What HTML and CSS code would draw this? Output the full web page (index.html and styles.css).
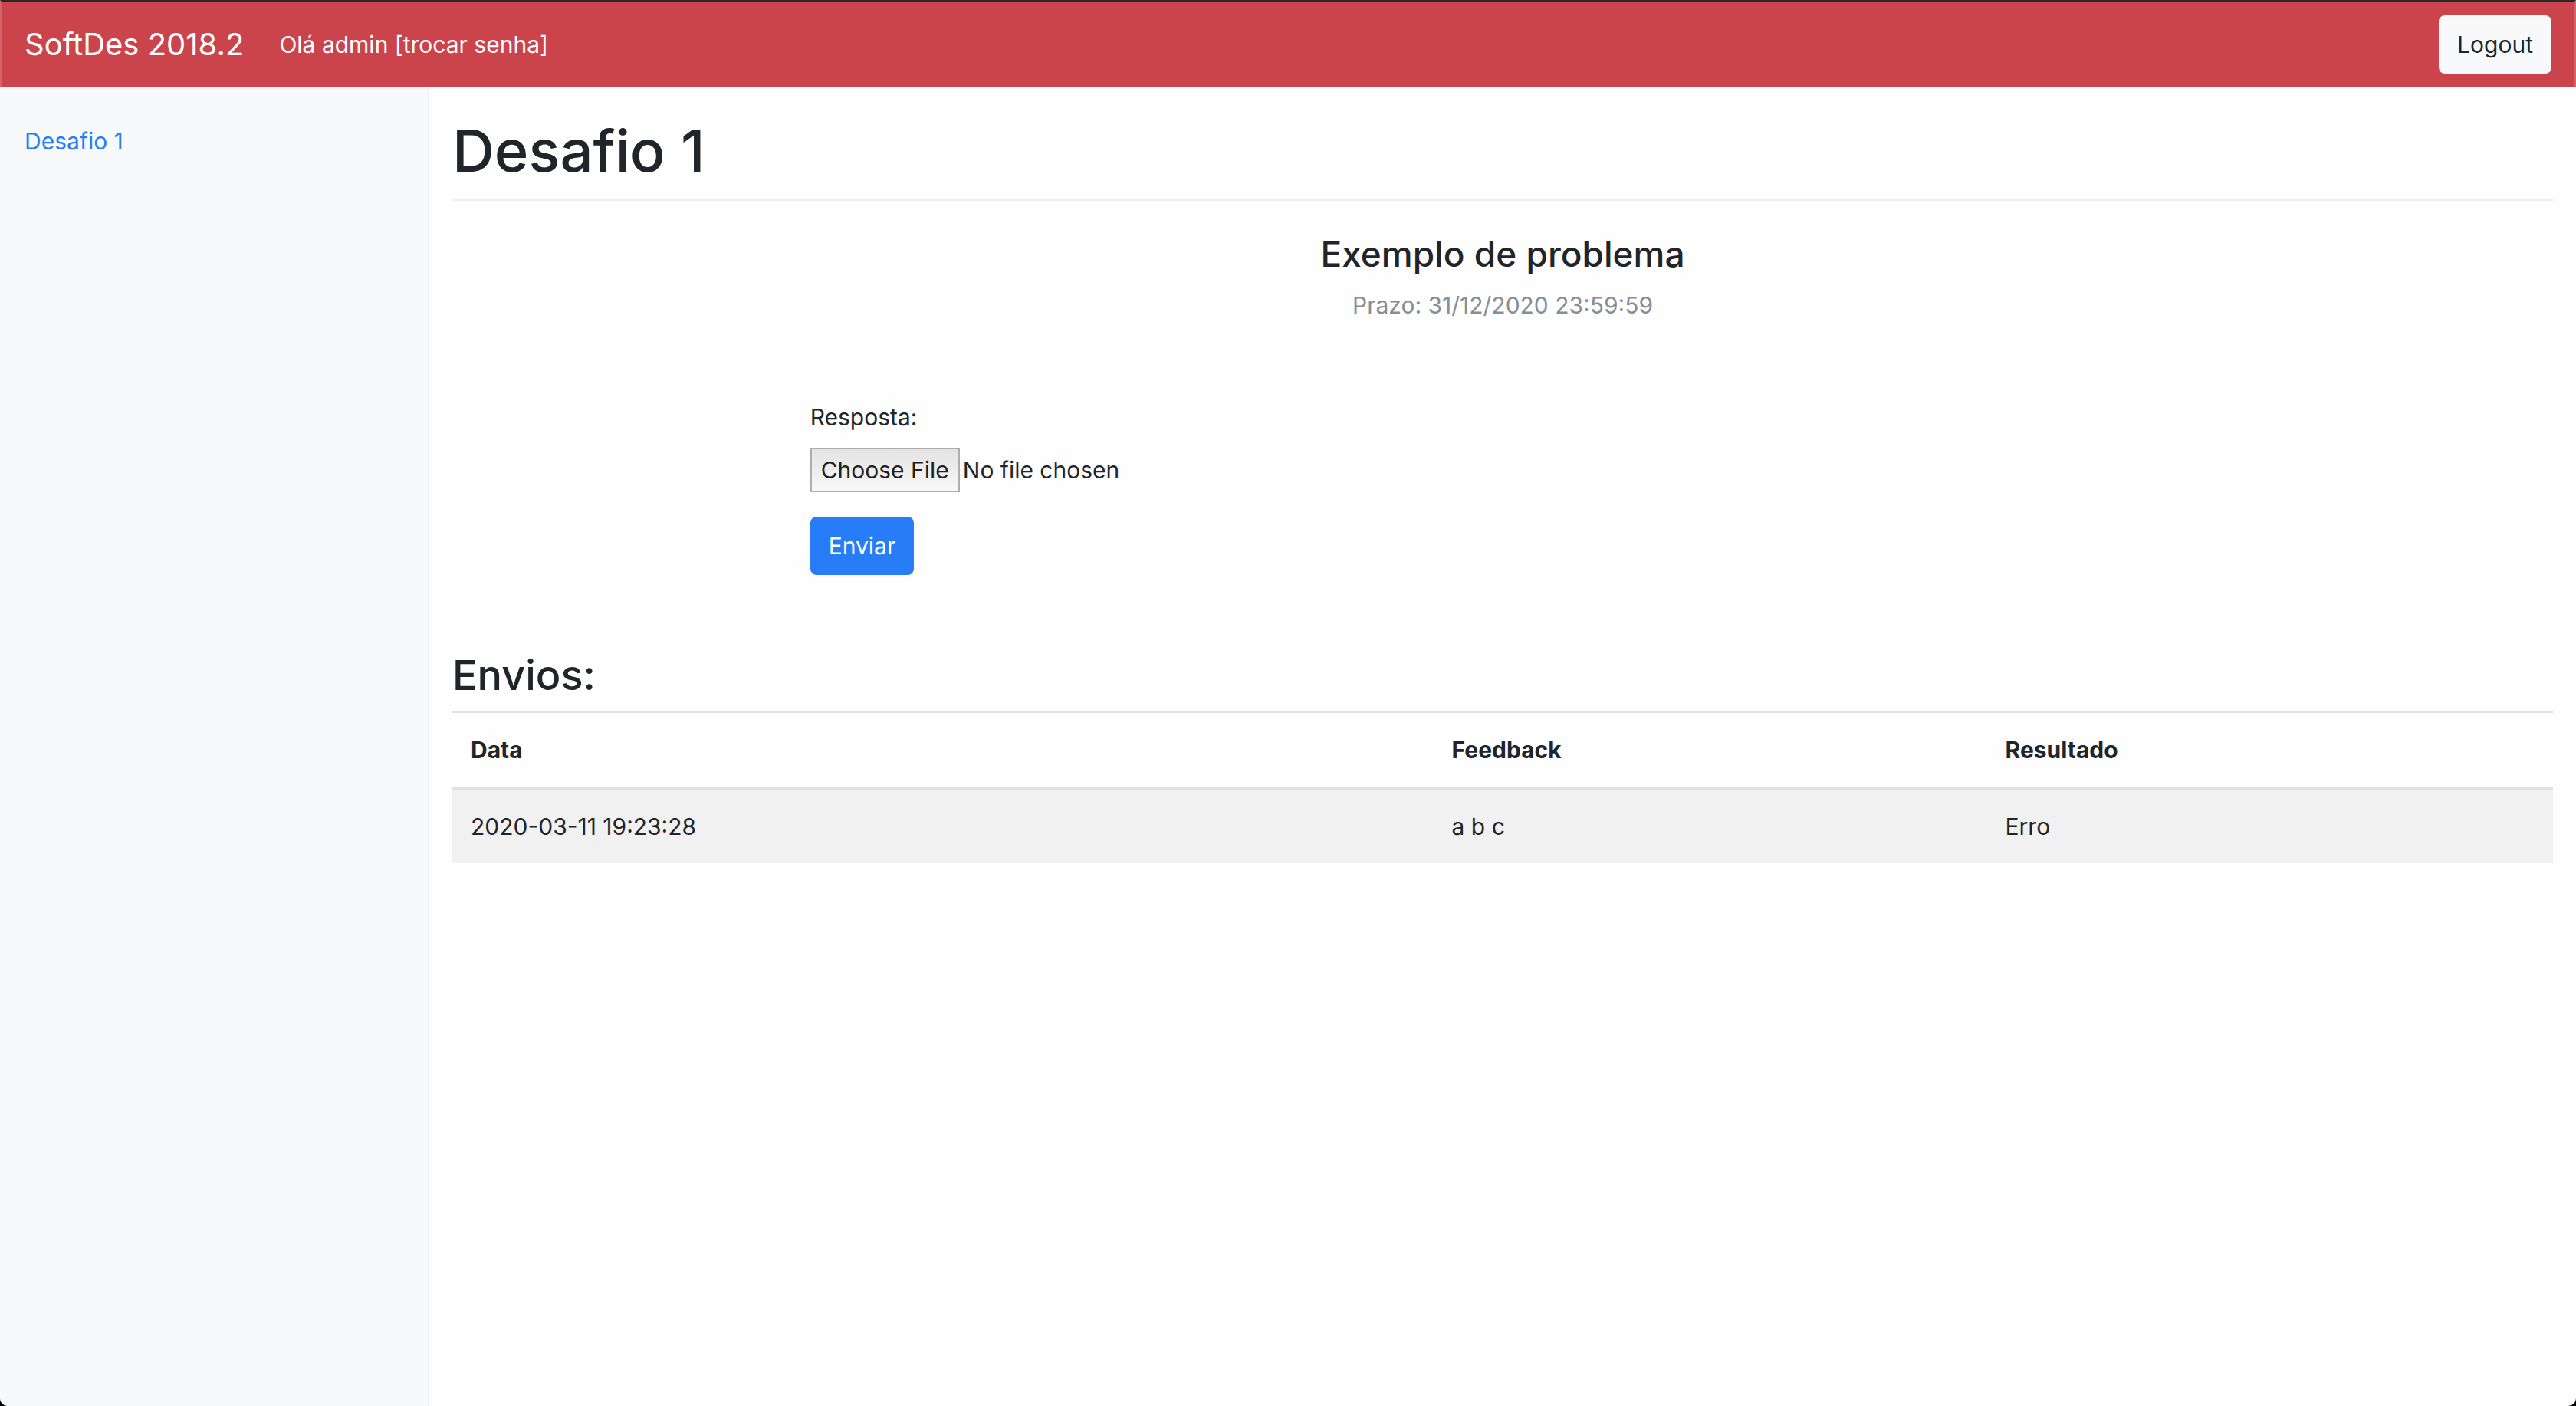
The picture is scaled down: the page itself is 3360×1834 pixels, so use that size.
FILE: index.html
```
<!DOCTYPE html>
<html lang="pt-BR">
<head>
<meta charset="utf-8">
<title>SoftDes 2018.2</title>
<link rel="stylesheet" href="styles.css">
</head>
<body>
<nav class="navbar">
  <a class="brand" href="#">SoftDes 2018.2</a>
  <a class="nav-user" href="#">Olá admin [trocar senha]</a>
  <button class="btn btn-light" type="button">Logout</button>
</nav>
<div class="layout">
  <aside class="sidebar">
    <a class="side-link" href="#">Desafio 1</a>
  </aside>
  <main class="content">
    <h1 class="title">Desafio 1</h1>
    <header class="problem">
      <h4 class="problem-name">Exemplo de problema</h4>
      <p class="deadline">Prazo: 31/12/2020 23:59:59</p>
    </header>
    <div class="row">
      <form class="answer">
        <label class="label" for="resposta">Resposta:</label>
        <input class="file" type="file" id="resposta">
        <button class="btn btn-primary" type="button">Enviar</button>
      </form>
    </div>
    <h3 class="subtitle">Envios:</h3>
    <table class="table">
      <thead>
        <tr><th class="col-date">Data</th><th class="col-feedback">Feedback</th><th>Resultado</th></tr>
      </thead>
      <tbody>
        <tr><td>2020-03-11 19:23:28</td><td>a b c</td><td>Erro</td></tr>
      </tbody>
    </table>
  </main>
</div>
</body>
</html>
```
FILE: styles.css
```
* {
  box-sizing: border-box;
}

html {
  background: #000;
}

body {
  margin: 0;
  min-height: 100vh;
  display: flex;
  flex-direction: column;
  overflow: hidden;
  border-radius: 0 0 10px 10px;
  background: #fefefe;
  color: #212529;
  font: 400 30px/48px Inter, "Liberation Sans", sans-serif;
}

a {
  color: #267df7;
  text-decoration: none;
}

.navbar {
  display: flex;
  align-items: center;
  padding: 18px 30px;
  border-top: 2px solid #282828;
  border-right: 2px solid #d3636a;
  border-left: 2px solid #d3636a;
  background: #cc444b;
}

.navbar .brand {
  margin-right: 46px;
  color: #fff;
  font-size: 40px;
}

.navbar .nav-user {
  margin-right: auto;
  color: #fff;
}

.btn {
  padding: 12px 22px;
  border: 2px solid transparent;
  border-radius: 8px;
  font: inherit;
}

.btn-light {
  border-color: #f8f9fb;
  background: #f8f9fb;
  color: #212529;
}

.btn-primary {
  border-color: #267df7;
  background: #267df7;
  color: #fff;
}

.layout {
  flex: 1;
  display: grid;
  grid-template-columns: 1fr 5fr;
}

.sidebar {
  padding: 46px 32px;
  border-right: 2px solid #eee;
  background: #f8f9fb;
}

.content {
  padding: 34px 30px;
}

.title {
  margin: 0 0 40px;
  padding: 0 0 16px;
  border-bottom: 2px solid #eee;
  font-size: 76px;
  font-weight: 500;
  line-height: 96px;
}

.problem {
  margin-bottom: 98px;
  text-align: center;
}

.problem-name {
  margin: 0 0 14px;
  font-size: 46px;
  font-weight: 500;
  line-height: 58px;
}

.deadline {
  margin: 0;
  color: #868e96;
}

.row {
  margin: 0 -30px 98px;
}

.answer {
  display: flex;
  flex-direction: column;
  align-items: flex-start;
  margin-left: 16.6667%;
  padding: 0 30px;
}

.label {
  margin-bottom: 16px;
}

.file {
  margin-bottom: 32px;
  font: inherit;
}

.file::file-selector-button {
  height: 58px;
  margin: 0 4px 0 0;
  padding: 0 12px;
  border: 2px solid #adadad;
  border-radius: 0;
  background: linear-gradient(#e3e3e3, #f8f8f8);
  color: #212121;
  font: inherit;
}

.subtitle {
  margin: 0 0 14px;
  font-size: 54px;
  font-weight: 500;
  line-height: 66px;
}

.table {
  width: 100%;
  table-layout: fixed;
  border-spacing: 0;
}

.table th,
.table td {
  padding: 24px;
  text-align: left;
}

.table th {
  border-top: 2px solid #dee2e6;
  border-bottom: 4px solid #dee2e6;
  font-weight: 700;
}

.table td {
  background: #f1f1f1;
}

.table .col-date {
  width: 46.7%;
}

.table .col-feedback {
  width: 26.35%;
}
```
